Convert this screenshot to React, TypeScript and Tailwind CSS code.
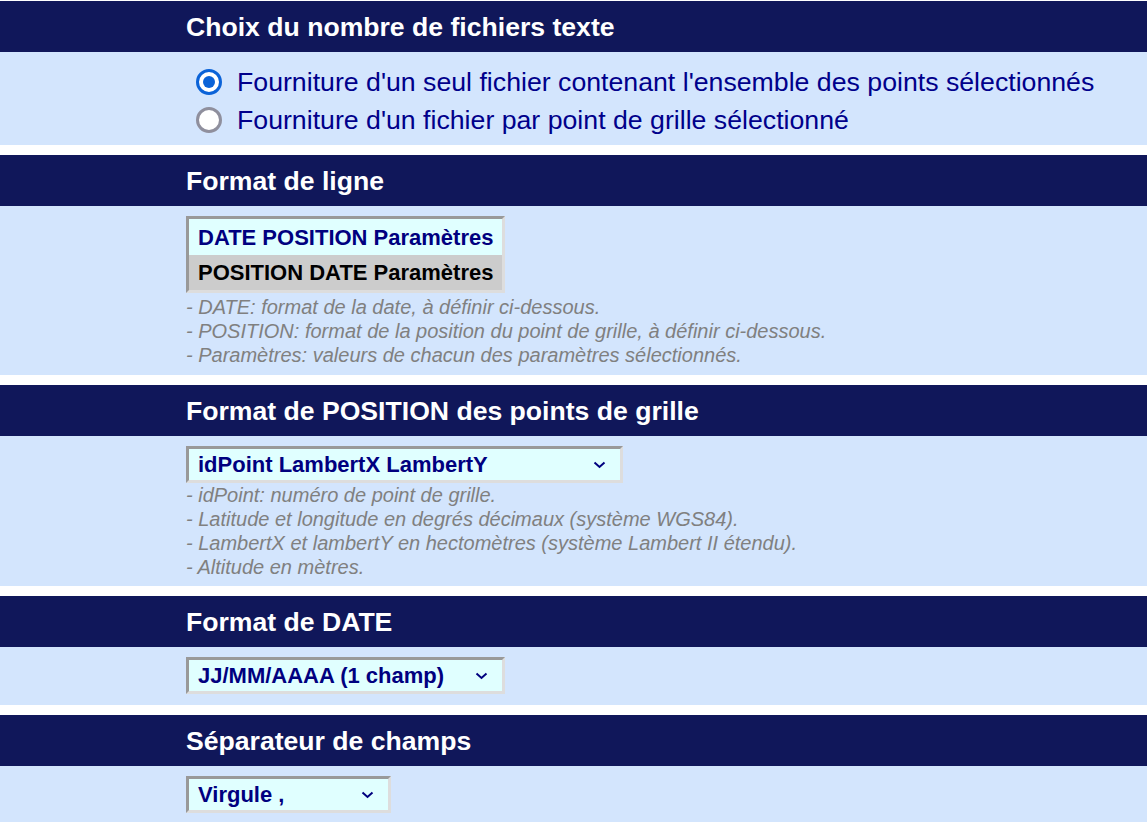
import React from "react";

// bloc titre + contenu
function Section({ title, children, className = "" }: { title: string; children: React.ReactNode; className?: string }) {
  return (
    <div className="mt-[10px] first:mt-[1px]">
      <div className="h-[51px] bg-[#10175a] pl-[186px] pt-[2px] flex items-center">
        <h2 className="text-white font-bold text-[26.6px] leading-none">{title}</h2>
      </div>
      <div className={"bg-[#d3e5fd] pl-[186px] " + className}>{children}</div>
    </div>
  );
}

function Radio({ checked, label }: { checked: boolean; label: string }) {
  return (
    <label className="flex items-center h-[38px]">
      <span
        className={
          "w-[26px] h-[26px] rounded-full border-[3px] bg-white flex items-center justify-center ml-[10px] " +
          (checked ? "border-[#0b63d8]" : "border-[#8f8f9d]")
        }
      >
        {checked && <span className="w-[12px] h-[12px] rounded-full bg-[#0b63d8]" />}
      </span>
      <span className="ml-[15px] text-[26.7px] text-[#00008b] leading-none">{label}</span>
    </label>
  );
}

function Select({ value, width }: { value: string; width: string }) {
  return (
    <div
      className={
        "h-[37px] bg-[#e0ffff] border-[3px] border-t-[#999999] border-l-[#999999] border-b-[#dddddd] border-r-[#dddddd] flex items-center justify-between pl-[9px] pr-[14px] " +
        width
      }
    >
      <span className="text-[22px] font-bold text-[#00007f] leading-none pt-[1px]">{value}</span>
      <svg width="13" height="8" viewBox="0 0 13 8">
        <polyline points="1.5,1.5 6.5,6 11.5,1.5" fill="none" stroke="#00007f" strokeWidth="2" />
      </svg>
    </div>
  );
}

function Notes({ lines }: { lines: string[] }) {
  return (
    <div className="text-[20px] italic text-[#808080] leading-[24px]">
      {lines.map((l) => (
        <div key={l}>{l}</div>
      ))}
    </div>
  );
}

export default function App() {
  return (
    <div className="w-[1147px] h-[822px] overflow-hidden bg-white" style={{ fontFamily: '"Liberation Sans", Arial, sans-serif' }}>
      <Section title="Choix du nombre de fichiers texte" className="h-[93px] pt-[11px]">
        <Radio checked label="Fourniture d'un seul fichier contenant l'ensemble des points sélectionnés" />
        <Radio checked={false} label="Fourniture d'un fichier par point de grille sélectionné" />
      </Section>

      <Section title="Format de ligne" className="h-[169px] pt-[10px]">
        <div className="w-[319px] border-[3px] border-t-[#999999] border-l-[#999999] border-b-[#dddddd] border-r-[#dddddd] bg-[#e0ffff]">
          <div className="h-[36px] flex items-center pl-[9px] pt-[1px] text-[22px] font-bold text-[#00007f]">DATE POSITION Paramètres</div>
          <div className="h-[35px] flex items-center pl-[9px] text-[22px] font-bold text-black bg-[#cccccc]">POSITION DATE Paramètres</div>
        </div>
        <div className="mt-[2px]">
          <Notes
            lines={[
              "- DATE: format de la date, à définir ci-dessous.",
              "- POSITION: format de la position du point de grille, à définir ci-dessous.",
              "- Paramètres: valeurs de chacun des paramètres sélectionnés.",
            ]}
          />
        </div>
      </Section>

      <Section title="Format de POSITION des points de grille" className="h-[150px] pt-[10px]">
        <Select value="idPoint LambertX LambertY" width="w-[437px]" />
        <Notes
          lines={[
            "- idPoint: numéro de point de grille.",
            "- Latitude et longitude en degrés décimaux (système WGS84).",
            "- LambertX et lambertY en hectomètres (système Lambert II étendu).",
            "- Altitude en mètres.",
          ]}
        />
      </Section>

      <Section title="Format de DATE" className="h-[58px] pt-[10px]">
        <Select value="JJ/MM/AAAA (1 champ)" width="w-[319px]" />
      </Section>

      <Section title="Séparateur de champs" className="h-[60px] pt-[10px]">
        <Select value="Virgule ," width="w-[205px]" />
      </Section>
    </div>
  );
}
